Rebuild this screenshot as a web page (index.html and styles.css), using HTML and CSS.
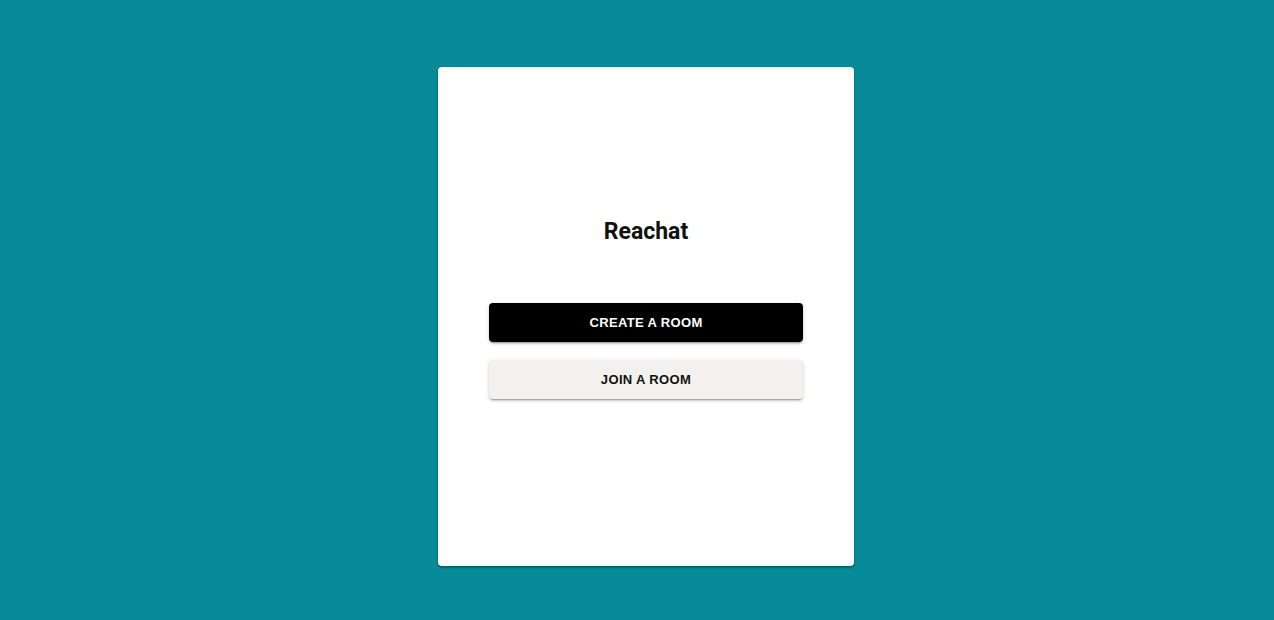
FILE: index.html
```html
<!DOCTYPE html>
<html>
<head>
<meta charset="utf-8">
<link rel="stylesheet" href="styles.css">
</head>
<body>
<div class="page">
  <div class="card">
    <h1 class="title">Reachat</h1>
    <div class="actions">
      <button class="btn btn-dark">CREATE A ROOM</button>
      <button class="btn btn-light">JOIN A ROOM</button>
    </div>
  </div>
</div>
</body>
</html>
```
FILE: styles.css
```css
html, body {
  margin: 0;
  padding: 0;
  background: #078b98;
}
.page {
  height: 620px;
  box-sizing: border-box;
  padding: 67px 0 0 438px;
  display: flex;
  align-items: flex-start;
}
.card {
  width: 416px;
  height: 499px;
  background: #ffffff;
  border-radius: 4px;
  box-shadow: 0 2px 2px rgba(0,0,0,0.25), 0 1px 3px rgba(0,0,0,0.12);
  box-sizing: border-box;
  padding-top: 151px;
  display: flex;
  flex-direction: column;
  align-items: center;
}
.title {
  margin: 0;
  font-family: Roboto, "Liberation Sans", sans-serif;
  font-weight: 700;
  font-size: 23px;
  line-height: 28px;
  color: #111;
}
.actions {
  margin-top: 57px;
  width: 314px;
  display: flex;
  flex-direction: column;
  gap: 18px;
}
.btn {
  height: 39px;
  border: none;
  border-radius: 4px;
  font-family: "Liberation Sans", Arial, sans-serif;
  font-weight: 700;
  font-size: 13px;
  letter-spacing: 0.35px;
  cursor: pointer;
  box-shadow: 0 3px 1px -2px rgba(0,0,0,0.2), 0 2px 2px 0 rgba(0,0,0,0.14), 0 1px 5px 0 rgba(0,0,0,0.12);
}
.btn-dark {
  background: #000;
  color: #fff;
}
.btn-light {
  background: #f3f1ed;
  color: #111;
}
```
